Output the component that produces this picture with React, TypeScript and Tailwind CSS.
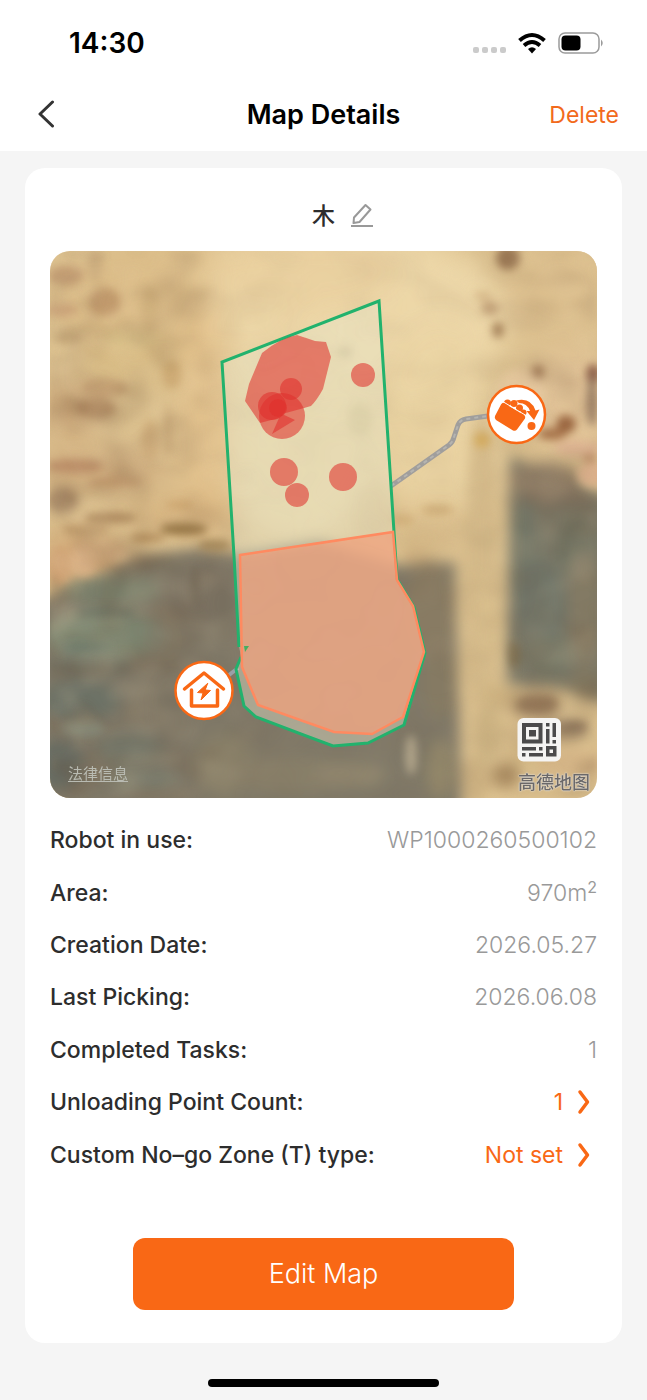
import React from 'react';

interface DetailRow {
  label: string;
  value: React.ReactNode;
  editable?: boolean;
}

const rows: DetailRow[] = [
  { label: 'Robot in use:', value: 'WP1000260500102' },
  { label: 'Area:', value: <>970m<sup className="text-base font-normal leading-none top-[-8px]">2</sup></> },
  { label: 'Creation Date:', value: '2026.05.27' },
  { label: 'Last Picking:', value: '2026.06.08' },
  { label: 'Completed Tasks:', value: '1' },
  { label: 'Unloading Point Count:', value: '1', editable: true },
  { label: 'Custom No–go Zone (T) type:', value: 'Not set', editable: true }
];

// [cx, cy, rx, ry, color, opacity]
type Patch = [number, number, number, number, string, number];

const groundPatches: Patch[] = [
  [180, 300, 130, 60, '#dcbd88', 0.9],
  [360, 320, 150, 90, '#eed9ab', 0.9],
  [300, 270, 100, 40, '#ead0a0', 0.9],
  [440, 430, 60, 110, '#ebd5a4', 0.9],
  [300, 440, 80, 100, '#e8d3a2', 0.9],
  [560, 290, 60, 60, '#dbbf8e', 0.9],
  [205, 430, 28, 130, '#e2c08c', 0.8],
  [130, 360, 50, 20, '#d6b981', 0.8],
  [70, 410, 30, 30, '#cda879', 0.8],
  [100, 470, 70, 18, '#c59b70', 0.6],
  [80, 560, 40, 30, '#cfa473', 0.9],
  [180, 515, 60, 14, '#d3ac78', 0.8],
  [430, 520, 60, 16, '#dbbd8b', 0.8],
  [570, 400, 50, 50, '#e2c399', 0.8]
];

const detailPatches: Patch[] = [
  [66, 275, 18, 10, '#bb926b', 0.7],
  [105, 302, 16, 14, '#b58a5f', 0.7],
  [62, 310, 16, 7, '#c2946f', 0.6],
  [68, 338, 13, 7, '#ae8d63', 0.6],
  [95, 265, 8, 16, '#c4a57a', 0.6],
  [150, 310, 10, 24, '#cbab78', 0.7],
  [130, 340, 28, 10, '#d8c187', 0.7],
  [104, 388, 24, 9, '#b78e64', 0.7],
  [96, 408, 20, 10, '#b08860', 0.7],
  [172, 375, 10, 14, '#c39c66', 0.6],
  [150, 440, 9, 20, '#c79f6d', 0.5],
  [168, 430, 4, 26, '#b99668', 0.5],
  [75, 466, 28, 7, '#b07f5d', 0.7],
  [115, 482, 28, 5, '#b78a60', 0.6],
  [62, 500, 16, 12, '#a48565', 0.7],
  [110, 518, 26, 6, '#a17c52', 0.8],
  [85, 530, 24, 6, '#b18b5e', 0.7],
  [148, 538, 18, 5, '#aa8352', 0.8],
  [184, 529, 24, 6, '#8d6d3c', 0.9],
  [215, 545, 16, 6, '#9a7c4c', 0.8],
  [180, 505, 14, 5, '#c0955c', 0.6],
  [60, 566, 12, 18, '#cfa274', 0.9],
  [84, 560, 14, 16, '#dbb488', 0.9],
  [108, 552, 20, 10, '#dcb688', 0.8],
  [508, 258, 12, 12, '#8f6c4a', 0.9],
  [490, 308, 9, 7, '#b18c65', 0.7],
  [498, 330, 6, 8, '#966f49', 0.8],
  [483, 296, 9, 5, '#c9a678', 0.6],
  [538, 372, 6, 7, '#99704e', 0.9],
  [593, 374, 7, 10, '#7c4b3a', 0.9],
  [592, 400, 5, 26, '#876d59', 0.8],
  [566, 424, 10, 9, '#8b522e', 0.9],
  [552, 434, 14, 6, '#995f37', 0.8],
  [482, 440, 8, 8, '#d5a955', 0.8],
  [520, 395, 26, 26, '#e6c8a0', 0.7],
  [578, 448, 24, 8, '#dfb593', 0.9],
  [592, 474, 14, 12, '#dbaf8c', 0.9],
  [590, 458, 7, 4, '#b47a58', 0.7],
  [438, 510, 16, 5, '#bd9762', 0.6],
  [402, 520, 12, 5, '#c9a36c', 0.6],
  [345, 352, 7, 5, '#bfae86', 0.7],
  [360, 420, 12, 16, '#cdbb89', 0.6],
  [105, 613, 30, 5, '#5d695d', 0.6],
  [85, 648, 26, 4, '#667266', 0.6],
  [82, 728, 22, 8, '#8d9887', 0.7],
  [70, 712, 18, 5, '#5f6a64', 0.5],
  [195, 585, 4, 20, '#655a49', 0.6],
  [411, 755, 6, 20, '#bcae91', 0.8],
  [538, 704, 20, 9, '#876a4d', 0.7],
  [572, 726, 16, 6, '#7f6850', 0.6],
  [514, 655, 6, 14, '#76623d', 0.6]
];

const fieldPatches: Patch[] = [
  [110, 590, 50, 16, '#78806c', 0.8],
  [105, 635, 60, 24, '#7d8b75', 0.8],
  [90, 665, 44, 10, '#6a6e63', 0.7],
  [165, 640, 18, 24, '#807967', 0.7],
  [200, 590, 34, 32, '#7a7061', 0.8],
  [225, 615, 8, 30, '#726857', 0.5],
  [150, 565, 34, 8, '#716756', 0.7],
  [80, 700, 40, 20, '#697066', 0.8],
  [60, 765, 24, 24, '#646d66', 0.9],
  [130, 750, 34, 16, '#6c7266', 0.7],
  [170, 710, 20, 40, '#7a7262', 0.7],
  [140, 780, 40, 12, '#75796c', 0.7],
  [225, 765, 30, 32, '#8b8169', 0.8],
  [290, 775, 60, 18, '#8b816a', 0.8],
  [350, 775, 36, 12, '#92876e', 0.8],
  [430, 610, 26, 50, '#8b7c63', 0.8],
  [440, 680, 18, 40, '#877b63', 0.8],
  [440, 770, 14, 30, '#958869', 0.8],
  [525, 560, 14, 60, '#727666', 0.9],
  [540, 610, 26, 50, '#707669', 0.9],
  [575, 545, 20, 36, '#6f7463', 0.7],
  [584, 610, 16, 60, '#867b64', 0.8],
  [545, 480, 36, 18, '#8b7862', 0.9],
  [560, 498, 36, 8, '#816f5b', 0.7],
  [550, 655, 24, 20, '#767866', 0.9],
  [585, 684, 16, 14, '#85785d', 0.7],
  [538, 706, 26, 12, '#957b5b', 0.8],
  [565, 730, 24, 10, '#8c765b', 0.8],
  [505, 775, 14, 12, '#977850', 0.8]
];

const pathPatches: Patch[] = [
  [482, 560, 17, 150, '#d2b787', 0.9],
  [486, 640, 11, 70, '#d8bf8d', 0.9],
  [500, 694, 20, 10, '#c8ad7c', 0.8],
  [545, 692, 26, 6, '#c5ab7e', 0.8],
  [582, 706, 24, 8, '#c8ae7f', 0.9],
  [488, 735, 14, 30, '#c8af7f', 0.8],
  [570, 764, 34, 16, '#d3b385', 0.9],
  [530, 755, 20, 10, '#ccb17e', 0.7],
  [474, 780, 14, 24, '#c5aa7c', 0.8],
  [430, 542, 30, 12, '#d2b585', 0.8],
  [415, 558, 14, 7, '#bf9e70', 0.7]
];

const Patches = ({ items }: { items: Patch[] }) => (
  <>
    {items.map(([cx, cy, rx, ry, fill, opacity], i) => (
      <ellipse key={i} cx={cx} cy={cy} rx={rx} ry={ry} fill={fill} opacity={opacity} />
    ))}
  </>
);

const SatelliteMap = () => (
  <svg viewBox="50 251 547 547" className="block w-full h-full" role="img" aria-label="Map">
    <defs>
      <filter id="soft" x="-20%" y="-20%" width="140%" height="140%" colorInterpolationFilters="sRGB">
        <feGaussianBlur stdDeviation="14" />
      </filter>
      <filter id="mid" x="-20%" y="-20%" width="140%" height="140%" colorInterpolationFilters="sRGB">
        <feGaussianBlur stdDeviation="7" />
      </filter>
      <filter id="fine" x="-20%" y="-20%" width="140%" height="140%" colorInterpolationFilters="sRGB">
        <feGaussianBlur stdDeviation="4" />
      </filter>
      <filter id="grain" x="0" y="0" width="100%" height="100%" colorInterpolationFilters="sRGB">
        <feTurbulence type="fractalNoise" baseFrequency="0.02 0.028" numOctaves="2" seed="8" />
        <feColorMatrix values="0 0 0 0 0.42  0 0 0 0 0.3  0 0 0 0 0.2  1.6 0 0 0 -0.65" />
        <feGaussianBlur stdDeviation="3" />
      </filter>
      <filter id="shine" x="0" y="0" width="100%" height="100%" colorInterpolationFilters="sRGB">
        <feTurbulence type="fractalNoise" baseFrequency="0.025 0.03" numOctaves="2" seed="21" />
        <feColorMatrix values="0 0 0 0 0.95  0 0 0 0 0.86  0 0 0 0 0.7  1.6 0 0 0 -0.65" />
        <feGaussianBlur stdDeviation="3" />
      </filter>
      <linearGradient id="grainFade" x1="0" x2="1" y1="0" y2="0">
        <stop offset="0" stopColor="#fff" />
        <stop offset="0.28" stopColor="#fff" stopOpacity="0.6" />
        <stop offset="0.4" stopColor="#fff" stopOpacity="0.15" />
        <stop offset="0.75" stopColor="#fff" stopOpacity="0.25" />
        <stop offset="1" stopColor="#fff" stopOpacity="0.8" />
      </linearGradient>
      <mask id="grainMask">
        <rect x="50" y="251" width="547" height="547" fill="url(#grainFade)" />
      </mask>
    </defs>

    <rect x="50" y="251" width="547" height="547" fill="#dcc18f" />
    <g filter="url(#soft)"><Patches items={groundPatches} /></g>
    <g filter="url(#mid)">
      <path d="M20 604 L75 590 L110 570 L140 556 L200 548 L240 554 L320 542 L400 566 L455 562 L462 830 L20 830 Z" fill="#7f7867" />
      <path d="M510 456 L550 474 L620 500 L620 708 L560 690 L507 684 Z" fill="#7a7766" />
      <Patches items={fieldPatches} />
      <Patches items={pathPatches} />
    </g>
    <g filter="url(#fine)"><Patches items={detailPatches} /></g>
    <g mask="url(#grainMask)">
      <rect x="50" y="251" width="547" height="547" filter="url(#grain)" opacity="0.45" />
      <rect x="50" y="251" width="547" height="547" filter="url(#shine)" opacity="0.3" />
    </g>

    {/* Travel paths */}
    <path d="M391 486 L449 445 Q453 442 454 437 L458 425 Q460 420 466 419 L488 416" fill="none" stroke="#a09e9c" strokeWidth="5" strokeLinejoin="round" />
    <path d="M391 486 L449 445 Q453 442 454 437 L458 425 Q460 420 466 419 L488 416" fill="none" stroke="#b5b4b0" strokeWidth="2" strokeDasharray="4 4" />
    <path d="M229 675 L238 668" stroke="#9a9fa8" strokeWidth="4" />

    {/* Working area */}
    <path d="M222 362 L379 301 L394 532 L397 579 L414 607 L425 653 L404 725 L368 743 L333 746 L256 717 L244 706 L236 669 L241 657 L239 646 L234 560 Z" fill="#e6e8cc" fillOpacity="0.42" />
    <path d="M239 647 L234 556 L222 362 L379 301 L394 532 L397 579 L414 607 L425 653 L404 725 L368 743 L333 746 L256 717 L244 706 L236 669 L241 657" fill="none" stroke="#22b26d" strokeWidth="3" />
    <path d="M240 555 L393 532 L397 580 L413 606 L424 652 L403 717 L372 734 L334 732 L258 705 L242 667 Z" fill="#f0a07c" fillOpacity="0.74" stroke="#ff8a60" strokeWidth="2.500" />
    <path d="M244 646 L249 646 L245 652 Z" fill="#45ae60" />

    {/* Obstacles */}
    <g fill="#e0302c" fillOpacity="0.57">
      <path d="M262 353 Q280 338 297 335 L315 341 L326 342 L331 357 L323 389 Q317 400 311 406 L282 414 L295 420 L272 434 L279 418 L260 423 L245 401 L249 384 Z" />
      <circle cx="291" cy="389" r="11" />
      <circle cx="282" cy="416" r="23" />
      <circle cx="272" cy="406" r="14" />
      <circle cx="278" cy="408" r="9" />
      <circle cx="363" cy="375" r="12" />
      <circle cx="284" cy="472" r="14" />
      <circle cx="297" cy="495" r="12" />
      <circle cx="343" cy="477" r="14" />
    </g>

    {/* Unloading point */}
    <g>
      <circle cx="516.500" cy="414.500" r="28.500" fill="#fff" stroke="#f96815" strokeWidth="2.500" />
      <g fill="#f96815">
        <circle cx="507.500" cy="403" r="3.500" />
        <circle cx="514" cy="403.500" r="3.500" />
        <circle cx="519.500" cy="408" r="3.500" />
        <circle cx="523.500" cy="412.500" r="3" />
      </g>
      <path d="M504 403 L524 415 Q526 416.500 525 418.500 L517 429.500 Q515.500 431.500 513 430.500 L496 420 Q494 418.500 495 416 L501 404.500 Q502.500 402 504 403 Z" fill="#f96815" />
      <path d="M503.500 402 L526 415.500" stroke="#fff" strokeWidth="1" />
      <path d="M516 400.500 Q531 397 535.500 410.500 L539.500 409.500 L534 420 L526.500 411 L530 411 Q527 403 519 403 Z" fill="#f96815" />
      <circle cx="531.500" cy="426" r="4" fill="#f96815" />
    </g>

    {/* Charging station */}
    <g fill="none" stroke="#f96815" strokeLinecap="round" strokeLinejoin="round">
      <circle cx="204" cy="690.500" r="28.500" fill="#fff" strokeWidth="2.500" />
      <path d="M184.500 689 L204 673 L223.500 689" strokeWidth="3.500" />
      <path d="M191.500 690 V706 H217.500 V690" strokeWidth="3.500" />
      <path d="M207.500 683.500 L197.500 692.500 L203 693 L201 700 L210.500 690.500 L205.500 690 Z" fill="#f96815" strokeWidth="1" />
    </g>

    {/* Map code */}
    <rect x="517.500" y="718" width="43.500" height="43.500" rx="6" fill="#f5f4f3" />
    <g fill="#4b4a4b">
      <path d="M522 723 h20.500 v20.500 h-20.500 Z M526 727 v12.500 h12.500 v-12.500 Z" fillRule="evenodd" />
      <rect x="529" y="730" width="7" height="6.500" />
      <rect x="546" y="723" width="3.500" height="3.500" />
      <rect x="546" y="729" width="3.500" height="14.500" />
      <rect x="552.500" y="723" width="3.500" height="14" />
      <rect x="552.500" y="740" width="3.500" height="3.500" />
      <rect x="522" y="747" width="14" height="3.500" />
      <rect x="539" y="747" width="3.500" height="3.500" />
      <rect x="522" y="753" width="3.500" height="3.500" />
      <rect x="529" y="753" width="14" height="3.500" />
      <path d="M546 746 h10.500 v10.500 h-10.500 Z M549.500 749.500 v3.500 h3.500 v-3.500 Z" fillRule="evenodd" />
    </g>
  </svg>
);

const ChevronRight = () => (
  <svg viewBox="0 0 14 26" className="w-3.5 h-[26px] mr-1.5" fill="none" stroke="#f96815" strokeWidth="3.500" strokeLinecap="round" strokeLinejoin="round" aria-hidden="true">
    <path d="M3 3 L10.500 13 L3 23" />
  </svg>
);

const StatusBar = () => (
  <div className="h-[86px] flex items-center justify-between pl-[69px] pr-[43px] text-black">
    <span className="text-[28px] leading-8 font-semibold">14:30</span>
    <div className="flex items-center gap-3">
      <svg viewBox="0 0 34 22" className="w-[34px] h-[22px]" fill="#cbcbcb" aria-hidden="true">
        <rect x="1" y="15" width="6" height="6" rx="2" />
        <rect x="10" y="15" width="6" height="6" rx="2" />
        <rect x="19" y="15" width="6" height="6" rx="2" />
        <rect x="28" y="15" width="6" height="6" rx="2" />
      </svg>
      <svg viewBox="0 0 28 22" className="w-7 h-[22px]" fill="none" stroke="#000" aria-hidden="true">
        <path d="M1.500 8.500 Q14 -2.500 26.500 8.500" strokeWidth="4" />
        <path d="M6 13.500 Q14 6.500 22 13.500" strokeWidth="3.800" />
        <path d="M10 17 Q14 13.500 18 17 L14 21.500 Z" fill="#000" stroke="none" />
      </svg>
      <svg viewBox="0 0 46 24" className="w-[46px] h-6" aria-hidden="true">
        <rect x="1" y="2" width="40" height="20" rx="6" fill="none" stroke="#9b9b9b" strokeWidth="1.500" />
        <rect x="3.500" y="4.500" width="19" height="15" rx="4" fill="#000" />
        <path d="M43 8.500 Q46.500 12 43 15.500 Z" fill="#9b9b9b" />
      </svg>
    </div>
  </div>
);

export default function App() {
  return (
    <div className="min-h-screen flex flex-col bg-[#f5f5f5] font-['Inter',_'Noto_Sans_CJK_SC',_sans-serif] text-[#2d2d2d]">
      <header className="bg-white">
        <StatusBar />
        <div className="h-[65px] grid grid-cols-[1fr_auto_1fr] items-center px-7 pb-2">
          <button type="button" aria-label="Back" className="justify-self-start ml-2">
            <svg viewBox="0 0 20 30" className="w-5 h-[30px]" fill="none" stroke="#333" strokeWidth="3" strokeLinecap="round" strokeLinejoin="round" aria-hidden="true">
              <path d="M16.500 2 L4 14 L16.500 26" />
            </svg>
          </button>
          <h1 className="text-[27px] leading-8 font-semibold text-black">Map Details</h1>
          <button type="button" className="justify-self-end text-[23px] leading-8 text-[#f26a1c]">Delete</button>
        </div>
      </header>

      <main className="mx-[25px] mt-[17px] px-[25px] pt-8 pb-[33px] bg-white rounded-[20px]">
        {/* Map name */}
        <div className="grid grid-cols-[1fr_auto_1fr] items-center gap-4 h-8">
          <h2 className="col-start-2 text-[23px] leading-8 font-medium">木</h2>
          <button type="button" aria-label="Rename map" className="justify-self-start">
            <svg viewBox="0 0 24 26" className="w-6 h-[26px]" fill="none" stroke="#999" strokeWidth="2" strokeLinejoin="round" aria-hidden="true">
              <path d="M14.500 2 L19.500 6.500 L8.500 19 L2.500 20 L3 14.500 Z" />
              <path d="M0 23 H22" />
            </svg>
          </button>
        </div>

        <div className="relative mt-[19px] aspect-square rounded-[20px] overflow-hidden">
          <SatelliteMap />
          <a href="#legal" className="absolute left-[18px] bottom-3.5 text-[15px] leading-5 text-[#b9bbb2] underline underline-offset-2">法律信息</a>
          <span className="absolute right-[7px] bottom-[3px] text-lg leading-6 font-medium text-[#6b6868] [text-shadow:0_0_1px_#fff,0_0_2px_#ddd]">高德地图</span>
        </div>

        {/* Map info */}
        <dl className="mt-4 grid auto-rows-fr min-h-[367px] text-[23px] leading-8">
          {rows.map((row) => (
            <div key={row.label} className="flex items-center justify-between">
              <dt className="font-medium">{row.label}</dt>
              <dd className="font-light text-[#999]">
                {row.editable ? (
                  <button type="button" className="flex items-center gap-3.5 font-normal text-[#f96815]">
                    {row.value}
                    <ChevronRight />
                  </button>
                ) : (
                  row.value
                )}
              </dd>
            </div>
          ))}
        </dl>

        <div className="mt-[57px] px-[83px]">
          <button type="button" className="block w-full h-[72px] rounded-xl bg-[#f96815] text-[27px] leading-8 font-light text-white">
            Edit Map
          </button>
        </div>
      </main>

      <div className="w-[231px] h-2 mt-auto mb-[13px] mx-auto rounded-full bg-black" />
    </div>
  );
}
